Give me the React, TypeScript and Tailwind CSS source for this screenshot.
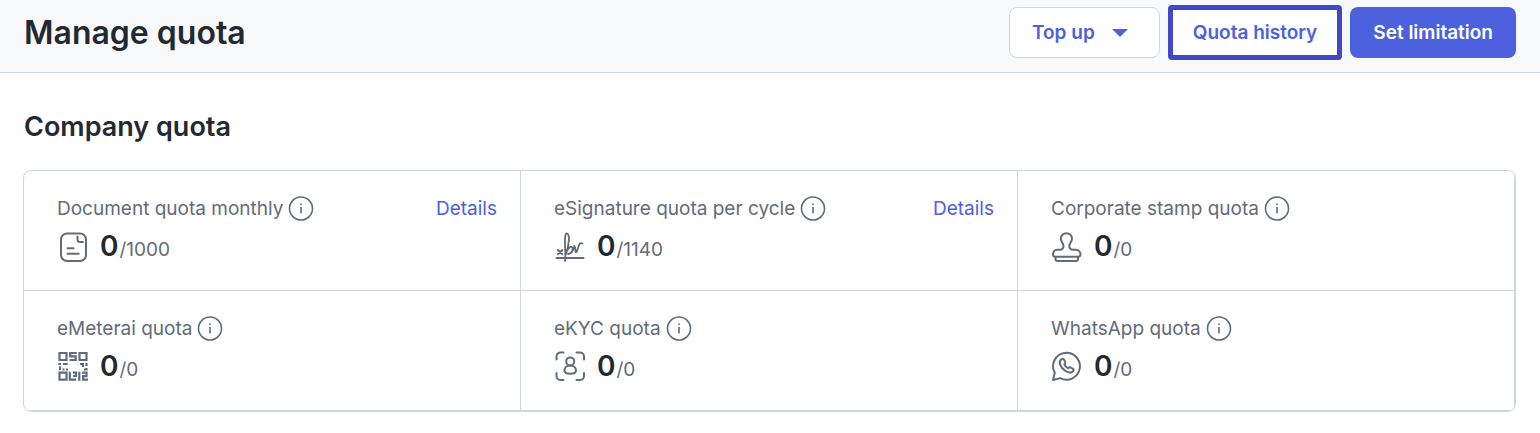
import type { ReactNode } from "react";

type Quota = {
  label: string;
  used: number;
  limit: number;
  icon: ReactNode;
  details?: boolean;
};

function QuotaIcon({ children }: { children: ReactNode }) {
  return (
    <svg
      viewBox="0 0 32 32"
      className="size-8 shrink-0"
      fill="none"
      stroke="currentColor"
      strokeWidth="2"
      strokeLinecap="round"
      strokeLinejoin="round"
      aria-hidden="true"
    >
      {children}
    </svg>
  );
}

const DocumentIcon = () => (
  <QuotaIcon>
    <rect x="4" y="2.5" width="25" height="27.5" rx="6" />
    <path d="M20.500 5.500V8.500a2.500 2.500 0 0 0 2.500 2.500H26M10.500 17.300H16.500M10.500 22.700H21.700" />
  </QuotaIcon>
);

const SignatureIcon = () => (
  <QuotaIcon>
    <path d="M2.500 27H29.500M4 19l4.300 4.300M8.300 19L4 23.300" />
    <path
      strokeWidth="1.8"
      d="M11 30C12.500 25 9 2.500 12.800 2.500C16.300 2.500 15 14 12 23C13 17.500 18 13.500 18.600 17.200C19 20 16.500 23 14 23C17 23.800 19.800 19 20.300 15C22.300 17 20.800 22.500 22.300 21.300C24 19.500 24 14 26 12.600C26.800 12 27.500 12.200 28.300 12.500"
    />
  </QuotaIcon>
);

const StampIcon = () => (
  <QuotaIcon>
    <path d="M12 13C13.300 16 11.800 18.500 8.800 18.800H6.500C3.500 18.800 2 21 2 23.300C2 24.800 2.800 25.800 4.300 25.800H26.700C28.200 25.800 29.500 24.800 29.500 23.300C29.500 21 27.500 18.800 24.500 18.800H22C19 18.500 17.500 16 18.800 13C19.500 11.300 21 10 21 7.500A5.600 5.300 0 0 0 9.800 7.500C9.800 10 11.300 11.300 12 13Z" />
    <path d="M4.500 26v2a2 2 0 0 0 2 2h18.500a2 2 0 0 0 2-2V26" />
  </QuotaIcon>
);

const QrIcon = () => (
  <QuotaIcon>
    <g strokeLinecap="butt" strokeLinejoin="miter" strokeWidth="2.2">
      <path d="M2.500 2h7v7h-7zM22.500 2h7v7h-7zM2.500 21.700h7v7h-7z" />
      <path d="M19.700 2H13.200V5.300H18.700V9H14M12.500 9h2" />
      <path d="M1.400 13H4M6 13h4.700M3 15.500v3.700M5.500 18.500h2M9 18.500h2M23 13h3v3M29.500 12v3M27 18.500h1.500M29.500 17v2.500" />
      <path d="M12.800 20.700V28.700H19M16 21.700H19V25H16M22.300 20.700V29.700M24.800 21.700H29.500V25.200H26V28.700H31" />
    </g>
  </QuotaIcon>
);

const FaceScanIcon = () => (
  <QuotaIcon>
    <path d="M2.500 8.500V5.500a4 4 0 0 1 4-4H9.500M22.500 1.500H26a4 4 0 0 1 4 4V8.500M30 22v3a4 4 0 0 1-4 4H22.500M9.500 29H6.500a4 4 0 0 1-4-4V22" />
    <circle cx="16.2" cy="10.4" r="4" />
    <path d="M16.200 14.400C12.500 14.400 10.400 16.700 10.400 19.300C10.400 22 12.700 22.800 16.200 22.800C19.700 22.800 22 22 22 19.300C22 16.700 19.900 14.400 16.200 14.400Z" />
  </QuotaIcon>
);

const WhatsAppIcon = () => (
  <QuotaIcon>
    <path d="M2 29L3.800 21.800A13.400 13.400 0 1 1 9.200 27.100Z" />
    <path d="M10.300 8.300C11.300 7.300 12.400 7.500 13 8.600L14.100 10.800C14.600 11.800 14.200 12.400 13.400 13.300C14 15 15.400 16.500 17.200 17.200C18 16.400 18.700 16 19.700 16.500L21.900 17.800C22.800 18.400 22.800 19.400 22 20.300C20.300 22.100 17.600 22 14.500 20C12.200 18.500 10 16 9.100 13.600C8.400 11.500 8.800 9.600 10.300 8.300Z" />
  </QuotaIcon>
);

const QUOTAS: Quota[] = [
  { label: "Document quota monthly", used: 0, limit: 1000, icon: <DocumentIcon />, details: true },
  { label: "eSignature quota per cycle", used: 0, limit: 1140, icon: <SignatureIcon />, details: true },
  { label: "Corporate stamp quota", used: 0, limit: 0, icon: <StampIcon /> },
  { label: "eMeterai quota", used: 0, limit: 0, icon: <QrIcon /> },
  { label: "eKYC quota", used: 0, limit: 0, icon: <FaceScanIcon /> },
  { label: "WhatsApp quota", used: 0, limit: 0, icon: <WhatsAppIcon /> },
];

function InfoButton({ label }: { label: string }) {
  return (
    <button type="button" aria-label={`About ${label}`} className="shrink-0">
      <svg viewBox="0 0 26 26" className="size-6.5" fill="none" stroke="currentColor" strokeWidth="1.6" aria-hidden="true">
        <circle cx="13" cy="12.5" r="11.5" />
        <path d="M13 11V17.500" />
        <circle cx="13" cy="8.2" r="0.9" fill="currentColor" stroke="none" />
      </svg>
    </button>
  );
}

function QuotaCell({ quota }: { quota: Quota }) {
  return (
    <div className="h-30 border-r border-b border-[#d0d6e0] pt-6 pr-[23px] pl-[33px]">
      <div className="flex items-center justify-between">
        <div className="flex items-center gap-[5px] text-[19px] leading-7 text-[#626b79]">
          <h3>{quota.label}</h3>
          <InfoButton label={quota.label} />
        </div>
        {quota.details && (
          <a href="#details" className="text-[19px] leading-7 text-[#4b61dd]">
            Details
          </a>
        )}
      </div>
      <div className="mt-[5px] flex items-center gap-[11px] text-[#626b79]">
        {quota.icon}
        <p className="flex items-baseline gap-px pt-0.5 leading-8">
          <span className="text-[28px] font-semibold text-[#232933]">{quota.used}</span>
          <span className="text-[19px]">/{quota.limit}</span>
        </p>
      </div>
    </div>
  );
}

export default function App() {
  return (
    <div className="min-h-screen bg-white font-[Inter,sans-serif] text-[#232933]">
      <header className="flex items-center justify-between border-b border-[#d0d6e0] bg-[#f8f9fb] px-6 pt-[5px] pb-3">
        <h1 className="text-[32px] leading-10 font-semibold">Manage quota</h1>
        <div className="flex items-center gap-2 text-[19px] font-semibold text-[#4b61dd]">
          <button
            type="button"
            className="flex h-[51px] items-center gap-4 rounded-lg border border-[#d0d6e0] bg-white pt-px pr-[30px] pl-[22px]"
          >
            Top up
            <svg viewBox="0 0 18 10" className="h-2.5 w-4.5" fill="currentColor" aria-hidden="true">
              <path d="M1 1h16L9 9z" />
            </svg>
          </button>
          <button type="button" className="h-[55px] rounded-sm border-5 border-[#4048c8] bg-white px-5 pt-px">
            Quota history
          </button>
          <button type="button" className="h-[51px] rounded-lg bg-[#4b61dd] px-[23px] pt-px text-white">
            Set limitation
          </button>
        </div>
      </header>

      <main className="pt-9 pr-6 pl-[23px]">
        <h2 className="pl-px text-[27px] leading-9 font-semibold">Company quota</h2>
        <section className="mt-[25px] grid grid-cols-3 overflow-hidden rounded-lg border border-[#d0d6e0]">
          {QUOTAS.map((quota) => (
            <QuotaCell key={quota.label} quota={quota} />
          ))}
        </section>
      </main>
    </div>
  );
}
